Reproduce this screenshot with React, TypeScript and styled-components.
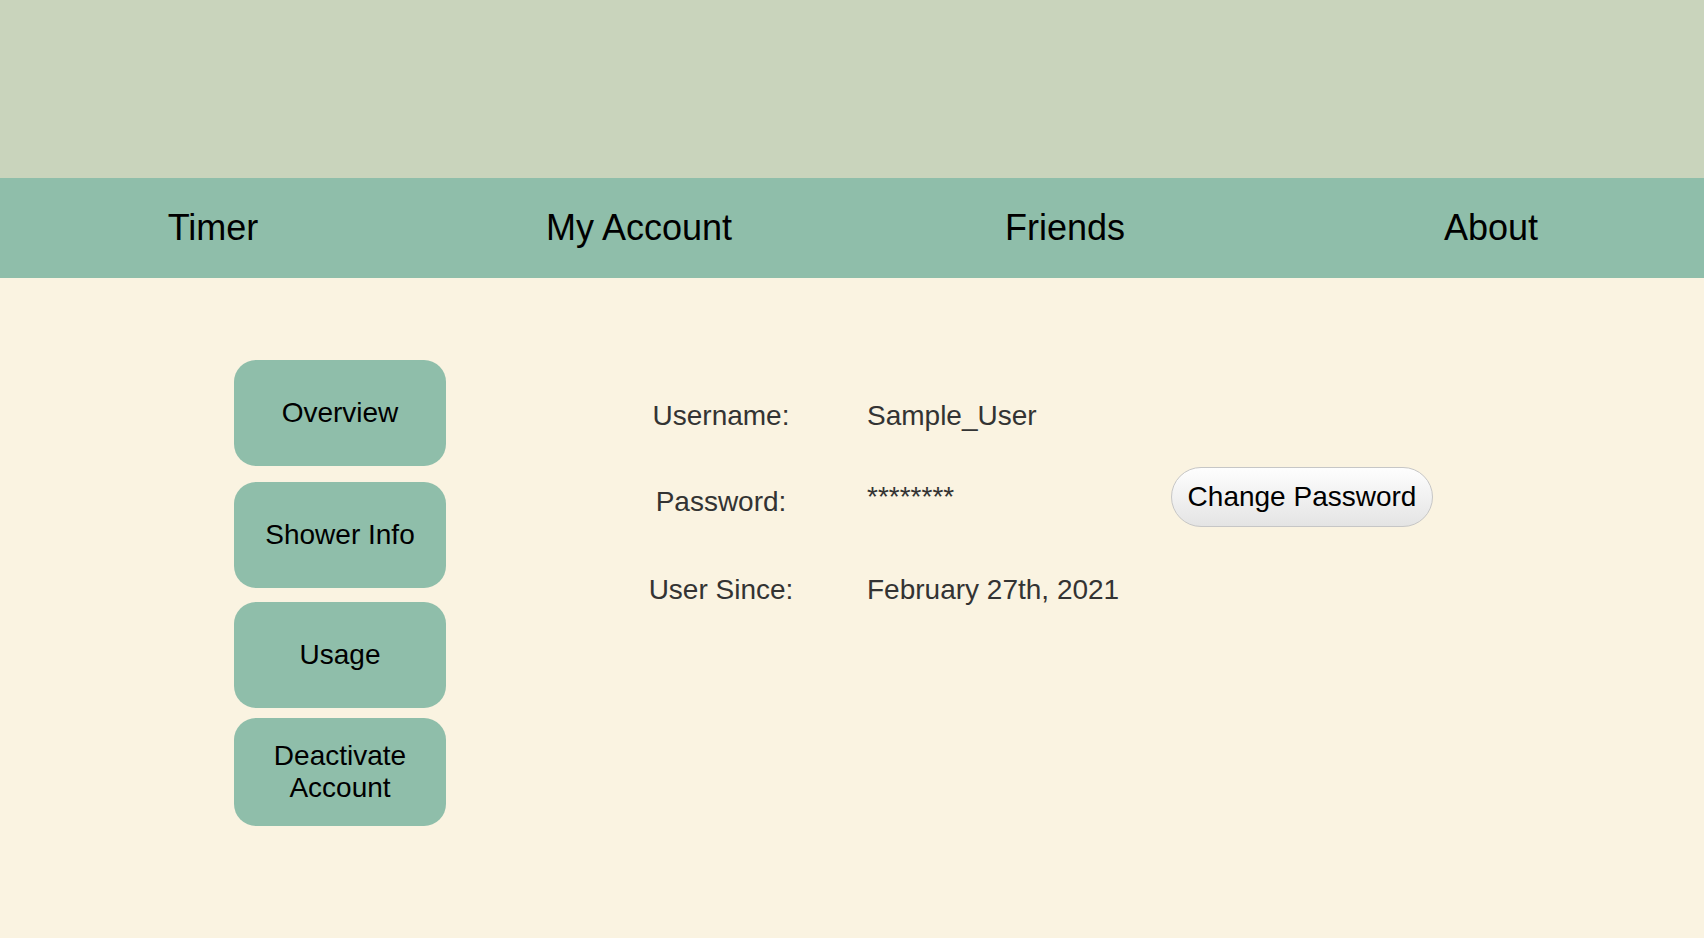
import React from "react";
import styled, { createGlobalStyle } from "styled-components";

const GlobalStyle = createGlobalStyle`
  html, body {
    margin: 0;
    padding: 0;
    background: #faf3e1;
    font-family: "Liberation Sans", Arial, Helvetica, sans-serif;
  }
  * { box-sizing: border-box; }
`;

const Page = styled.div`
  min-height: 938px;
  background: #faf3e1;
  display: flex;
  flex-direction: column;
`;

const Banner = styled.header`
  height: 178px;
  background: #c9d4bc;
`;

const NavBar = styled.nav`
  height: 100px;
  background: #8fbeaa;
  display: grid;
  grid-template-columns: repeat(4, 1fr);
  align-items: center;
`;

const NavItem = styled.a`
  text-align: center;
  font-size: 36px;
  color: #000;
  text-decoration: none;
  cursor: pointer;
`;

const Main = styled.main`
  display: flex;
  align-items: flex-start;
  padding: 82px 0 0 234px;
`;

const Sidebar = styled.aside`
  display: flex;
  flex-direction: column;
  width: 212px;
`;

const SideButton = styled.button<{ $top: number; $h: number }>`
  margin-top: ${(p) => p.$top}px;
  height: ${(p) => p.$h}px;
  width: 212px;
  border: none;
  border-radius: 22px;
  background: #8fbeaa;
  color: #000;
  font-family: "Liberation Sans", Arial, Helvetica, sans-serif;
  font-size: 28px;
  line-height: 32px;
  text-align: center;
  padding: 0 20px;
  cursor: pointer;
`;

const InfoGrid = styled.section`
  margin: 26px 0 0 200px;
  display: grid;
  grid-template-columns: 150px 233px auto;
  column-gap: 71px;
  grid-template-rows: 81px 93px 60px;
  align-items: start;
`;

const Label = styled.div<{ $drop?: number }>`
  height: 60px;
  display: flex;
  align-items: center;
  justify-content: center;
  font-size: 28px;
  color: #333;
  white-space: nowrap;
  padding-top: ${(p) => p.$drop ?? 0}px;
`;

const Value = styled.div`
  height: 60px;
  display: flex;
  align-items: center;
  font-size: 28px;
  color: #333;
  white-space: nowrap;
`;

const PillButton = styled.button`
  height: 60px;
  width: 262px;
  border: 1.5px solid #c6c6c6;
  border-radius: 30px;
  background: linear-gradient(#fefefe, #e4e4e4);
  font-family: "Liberation Sans", Arial, Helvetica, sans-serif;
  font-size: 28px;
  color: #000;
  padding: 0;
  cursor: pointer;
`;

const Empty = styled.div``;

export default function App() {
  return (
    <>
      <GlobalStyle />
      <Page>
        <Banner />
        <NavBar>
          <NavItem>Timer</NavItem>
          <NavItem>My Account</NavItem>
          <NavItem>Friends</NavItem>
          <NavItem>About</NavItem>
        </NavBar>
        <Main>
          <Sidebar>
            <SideButton $top={0} $h={106}>Overview</SideButton>
            <SideButton $top={16} $h={106}>Shower Info</SideButton>
            <SideButton $top={14} $h={106}>Usage</SideButton>
            <SideButton $top={10} $h={108}>Deactivate Account</SideButton>
          </Sidebar>
          <InfoGrid>
            <Label>Username:</Label>
            <Value>Sample_User</Value>
            <Empty />
            <Label $drop={9}>Password:</Label>
            <Value>********</Value>
            <PillButton>Change Password</PillButton>
            <Label>User Since:</Label>
            <Value>February 27th, 2021</Value>
            <Empty />
          </InfoGrid>
        </Main>
      </Page>
    </>
  );
}
